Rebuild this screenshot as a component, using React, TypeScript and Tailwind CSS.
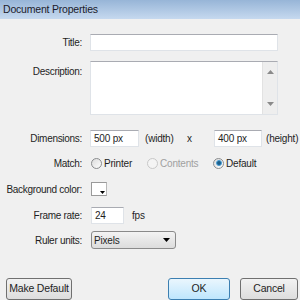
import React from "react";

const font = { fontFamily: '"Liberation Sans", Arial, sans-serif' };

function Label({ children, top }: { children: React.ReactNode; top?: boolean }) {
  return (
    <div className={`w-[82px] shrink-0 text-right text-[10px] tracking-[-0.3px] text-[#1e1e1e] ${top ? "pt-[3px]" : ""}`}>
      {children}
    </div>
  );
}

function Input({ w, value }: { w: string; value?: string }) {
  return (
    <div
      className={`${w} h-[17px] bg-white border border-[#dfe3e8] border-t-[#a9abb2] flex items-center pl-[3px] text-[10px] tracking-[-0.2px] text-[#1e1e1e]`}
    >
      {value}
    </div>
  );
}

function Radio({ checked, disabled }: { checked?: boolean; disabled?: boolean }) {
  return (
    <div
      className={`w-[11px] h-[11px] rounded-full border flex items-center justify-center ${
        disabled ? "border-[#c8c8c8] bg-[#f4f4f4]" : "border-[#8a8c8e] bg-gradient-to-br from-[#dcdcdc] to-[#fdfdfd]"
      }`}
    >
      {checked && <div className="w-[6px] h-[6px] rounded-full bg-[#1d5f8a] border border-[#4aa0d8]" />}
    </div>
  );
}

function Btn({ children, w, primary }: { children: React.ReactNode; w: string; primary?: boolean }) {
  return (
    <div
      className={`${w} h-[22px] rounded-[3px] border flex items-center justify-center text-[10.5px] tracking-[-0.2px] text-[#1e1e1e] ${
        primary
          ? "border-[#3c7fb1] bg-gradient-to-b from-[#eaf6fd] to-[#bee6fd]"
          : "border-[#707070] bg-gradient-to-b from-[#f2f2f2] to-[#dddddd]"
      }`}
    >
      {children}
    </div>
  );
}

export default function App() {
  return (
    <div className="w-[300px] h-[300px] overflow-hidden bg-[#f0f0f0] flex flex-col" style={font}>
      <div className="h-[19px] shrink-0 bg-gradient-to-b from-[#97b5d7] to-[#c6d9ef] flex items-center pl-[3px] text-[10.5px] tracking-[-0.2px] text-[#1b1b2b]">
        Document Properties
      </div>

      <div className="flex items-center mt-[15px] h-[17px]">
        <Label>Title:</Label>
        <div className="ml-[8px]">
          <Input w="w-[188px]" />
        </div>
      </div>

      <div className="flex items-start mt-[10px] h-[54px]">
        <Label top>Description:</Label>
        <div className="ml-[8px] w-[188px] h-[54px] bg-white border border-[#dfe3e8] border-t-[#a9abb2] flex justify-end">
          <div className="w-[15px] h-full bg-[#eeeeee] border-l border-[#e2e2e2] flex flex-col items-center justify-between py-[8px]">
            <svg width="7" height="4" viewBox="0 0 7 4"><path d="M0 4 L3.5 0 L7 4 Z" fill="#8a8a8a" /></svg>
            <svg width="7" height="4" viewBox="0 0 7 4"><path d="M0 0 L3.5 4 L7 0 Z" fill="#8a8a8a" /></svg>
          </div>
        </div>
      </div>

      <div className="flex items-center mt-[15px] h-[17px] text-[10px] tracking-[-0.2px] text-[#1e1e1e]">
        <Label>Dimensions:</Label>
        <div className="ml-[8px]">
          <Input w="w-[49px]" value="500 px" />
        </div>
        <span className="ml-[6px] w-[42px]">(width)</span>
        <span className="w-[27px]">x</span>
        <Input w="w-[48px]" value="400 px" />
        <span className="ml-[4px]">(height)</span>
      </div>

      <div className="flex items-center mt-[8px] h-[18px] text-[10px] tracking-[-0.2px] text-[#1e1e1e]">
        <Label>Match:</Label>
        <div className="ml-[9px] w-[56px] flex items-center gap-[2px]">
          <Radio />
          <span>Printer</span>
        </div>
        <div className="w-[66px] flex items-center gap-[2px]">
          <Radio disabled />
          <span className="text-[#a0a0a0]">Contents</span>
        </div>
        <div className="flex items-center gap-[2px]">
          <Radio checked />
          <span>Default</span>
        </div>
      </div>

      <div className="flex items-center mt-[10px] h-[18px]">
        <Label>Background color:</Label>
        <div className="ml-[9px] w-[16px] h-[14px] bg-white border border-[#9a9a9a] border-r-[#b8b8b8] relative">
          <svg className="absolute right-[1px] bottom-[1px]" width="5" height="3" viewBox="0 0 5 3">
            <path d="M0 0 L5 0 L2.5 3 Z" fill="#000" />
          </svg>
        </div>
      </div>

      <div className="flex items-center mt-[10px] h-[17px] text-[10px] tracking-[-0.2px] text-[#1e1e1e]">
        <Label>Frame rate:</Label>
        <div className="ml-[9px]">
          <Input w="w-[33px]" value="24" />
        </div>
        <span className="ml-[8px]">fps</span>
      </div>

      <div className="flex items-center mt-[7px] h-[18px]">
        <Label>Ruler units:</Label>
        <div className="ml-[9px] w-[85px] h-[18px] rounded-[3px] border border-[#8a8a8a] bg-gradient-to-b from-[#f3f3f3] to-[#dcdcdc] flex items-center justify-between pl-[2px] pr-[5px] text-[10px] tracking-[-0.2px] text-[#1e1e1e]">
          <span>Pixels</span>
          <svg width="7" height="4" viewBox="0 0 7 4"><path d="M0 0 L7 0 L3.5 4 Z" fill="#000" /></svg>
        </div>
      </div>

      <div className="flex items-start mt-[29px] pl-[6px] pr-[2px]">
        <Btn w="w-[66px]">Make Default</Btn>
        <div className="ml-auto flex gap-[10px]">
          <Btn w="w-[62px]" primary>OK</Btn>
          <Btn w="w-[58px]">Cancel</Btn>
        </div>
      </div>
    </div>
  );
}
